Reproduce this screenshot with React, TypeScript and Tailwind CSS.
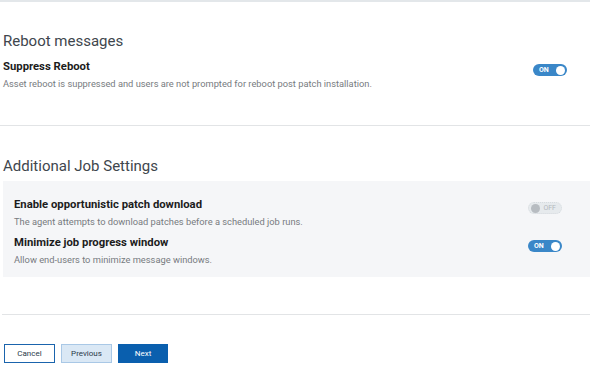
function Toggle({ on }: { on: boolean }) {
  if (on) {
    return (
      <div className="flex h-[12px] w-[34px] shrink-0 items-center justify-between rounded-full bg-[#3a87c8] pl-[6px] pr-[2px]">
        <span className="text-[7px] font-bold leading-none text-white">ON</span>
        <span className="h-[9px] w-[9px] rounded-full bg-white" />
      </div>
    );
  }
  return (
    <div className="flex h-[12px] w-[34px] shrink-0 items-center justify-between rounded-full border border-dotted border-[#d6dbdf] bg-[#e6eaed] pl-[2px] pr-[5px]">
      <span className="h-[9px] w-[9px] rounded-full bg-[#b7bcc1]" />
      <span className="text-[7px] leading-none text-[#b3b8bd]">OFF</span>
    </div>
  );
}

function Setting({ title, desc, on }: { title: string; desc: string; on: boolean }) {
  return (
    <div className="flex items-start justify-between">
      <div>
        <div className="text-[11.3px] font-bold leading-[14px] text-[#1c1c1c]">{title}</div>
        <div className="mt-[4px] text-[9.3px] leading-[11px] text-[#777b80]">{desc}</div>
      </div>
      <div className="mt-[4px]">
        <Toggle on={on} />
      </div>
    </div>
  );
}

export default function App() {
  return (
    <div className="min-h-[375px] w-[590px] bg-white font-['Roboto',sans-serif]">
      <div className="h-[2px] w-[590px] bg-[#e3e7ea]" />

      {/* Reboot messages */}
      <div className="pl-[3px] pr-[23px] pt-[29px]">
        <h2 className="text-[15px] leading-[20px] text-[#40464d]">Reboot messages</h2>
        <div className="mt-[9px]">
          <Setting
            title="Suppress Reboot"
            desc="Asset reboot is suppressed and users are not prompted for reboot post patch installation."
            on
          />
        </div>
      </div>

      <div className="mt-[36px] h-[1px] w-[590px] bg-[#e2e4e6]" />

      {/* Additional Job Settings */}
      <div className="pl-[3px] pt-[30px]">
        <h2 className="text-[15px] leading-[20px] text-[#40464d]">Additional Job Settings</h2>
        <div className="mt-[5px] flex h-[96px] flex-col gap-[9px] bg-[#f5f6f8] pl-[11px] pr-[28px] pt-[17px]">
          <Setting
            title="Enable opportunistic patch download"
            desc="The agent attempts to download patches before a scheduled job runs."
            on={false}
          />
          <Setting
            title="Minimize job progress window"
            desc="Allow end-users to minimize message windows."
            on
          />
        </div>
      </div>

      <div className="ml-[2px] mt-[37px] h-[1px] w-[588px] bg-[#e2e4e6]" />

      {/* Footer buttons */}
      <div className="flex gap-[6px] pl-[4px] pt-[29px]">
        <button className="h-[19px] w-[51px] border border-[#1a64ad] bg-white text-[8px] text-[#2b3a4a]">
          Cancel
        </button>
        <button className="h-[19px] w-[51px] border border-[#a9c8e6] bg-[#dae8f5] text-[8px] text-[#2b3a4a]">
          Previous
        </button>
        <button className="h-[19px] w-[50px] border border-[#0a5fae] bg-[#0a5fae] text-[8px] text-white">
          Next
        </button>
      </div>
    </div>
  );
}
